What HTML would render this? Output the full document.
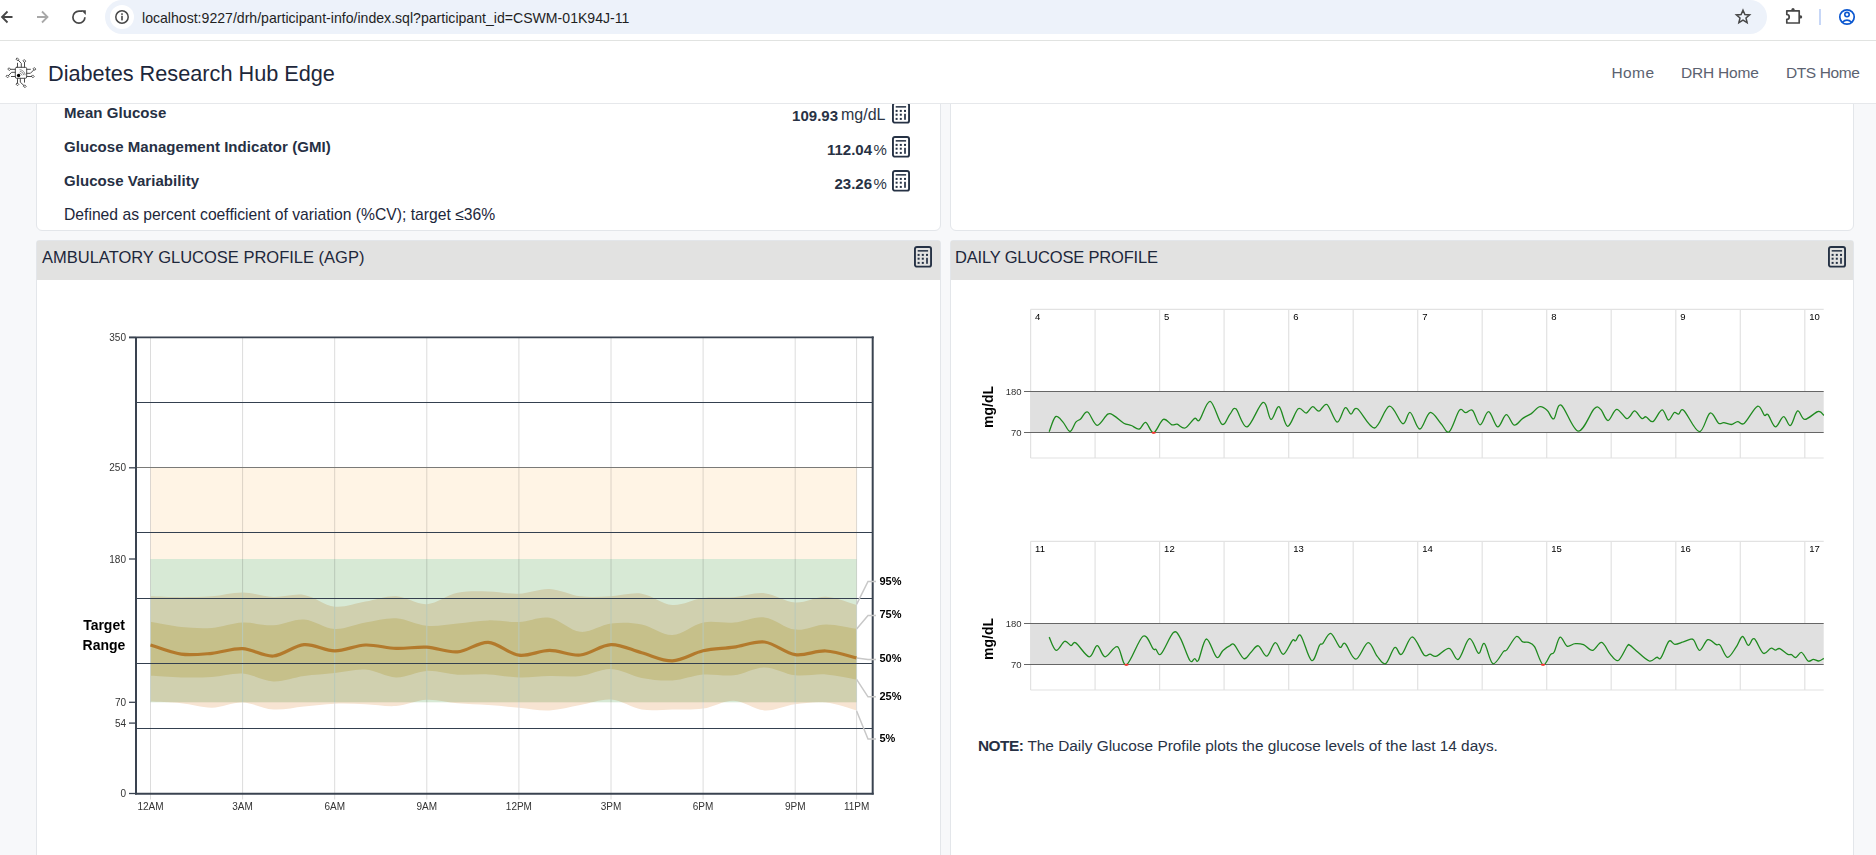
<!DOCTYPE html>
<html><head><meta charset="utf-8">
<style>
*{box-sizing:border-box;margin:0;padding:0}
html,body{width:1876px;height:855px;overflow:hidden;background:#f7f8fa;font-family:"Liberation Sans",sans-serif;color:#1d273b}
.abs{position:absolute}
#chrome{position:absolute;left:0;top:0;width:1876px;height:41px;background:#fff;border-bottom:1px solid #e1e3e1;z-index:20}
#pill{position:absolute;left:105px;top:0px;width:1662px;height:34px;border-radius:17px;background:#edf2fa}
#infoc{position:absolute;left:110px;top:5px;width:24px;height:24px;border-radius:12px;background:#fff}
#url{position:absolute;left:142px;top:9.5px;font-size:14.1px;color:#1f1f1f;white-space:nowrap;letter-spacing:0}
#nav{position:absolute;left:0;top:41px;width:1876px;height:63px;background:#fff;border-bottom:1px solid #e6e8eb;z-index:10}
#brand{position:absolute;left:48px;top:61px;font-size:21.7px;color:#1d273b;white-space:nowrap;z-index:11}
.nl{position:absolute;top:64px;font-size:15.5px;color:#5b6270;white-space:nowrap;z-index:11}
.card{position:absolute;background:#fff;border:1px solid #e3e6ea;border-radius:6px}
.hdr{position:absolute;background:#e2e2e1;}
.ht{position:absolute;font-size:16.5px;color:#1d273b;white-space:nowrap}
.lbl{position:absolute;font-size:15px;font-weight:bold;color:#263044;letter-spacing:0.05px;white-space:nowrap}
.val{position:absolute;font-size:15px;white-space:nowrap;color:#1d273b;text-align:right}
svg text{font-family:"Liberation Sans",sans-serif}
.ax{font-size:10px;fill:#333}
.pl{font-size:11px;font-weight:bold;fill:#000}
.tr{font-size:14px;font-weight:bold;fill:#000}
.dax{font-size:9.5px;fill:#333}
.dl{font-size:9.5px;fill:#000}
.mg{font-size:14px;font-weight:bold;fill:#000}
</style></head><body>
<!-- browser chrome -->
<div id="chrome">
  <svg class="abs" style="left:0;top:0" width="100" height="40" viewBox="0 0 100 40">
    <path d="M12.5,17 H2.5 M7.5,11.5 L2,17 L7.5,22.5" fill="none" stroke="#474747" stroke-width="1.8"/>
    <path d="M37,17 H47.5 M42,11.5 L47.5,17 L42,22.5" fill="none" stroke="#a8a8a8" stroke-width="1.8"/>
    <path d="M84.9,17.2 A6,6 0 1 1 78.9,11.2 H82.5" fill="none" stroke="#474747" stroke-width="1.7"/>
    <path d="M81.2,10.3 L85.8,10.3 L85.8,14.9 Z" fill="#474747"/>
  </svg>
  <div id="pill"></div>
  <div id="infoc"></div>
  <svg class="abs" style="left:114px;top:9px" width="16" height="16" viewBox="0 0 16 16">
    <circle cx="8" cy="8" r="6.2" fill="none" stroke="#474747" stroke-width="1.5"/>
    <rect x="7.2" y="6.8" width="1.6" height="4.6" fill="#474747"/>
    <rect x="7.2" y="4.3" width="1.6" height="1.6" fill="#474747"/>
  </svg>
  <div id="url">localhost:9227/drh/participant-info/index.sql?participant_id=CSWM-01K94J-11</div>
  <svg class="abs" style="left:1734px;top:8px" width="18" height="18" viewBox="0 0 18 18">
    <path d="M9,2.2 L10.9,6.6 L15.6,6.9 L12,10 L13.1,14.6 L9,12.1 L4.9,14.6 L6,10 L2.4,6.9 L7.1,6.6 Z" fill="none" stroke="#474747" stroke-width="1.5" stroke-linejoin="miter"/>
  </svg>
  <svg class="abs" style="left:1780px;top:4px" width="26" height="24" viewBox="1780 4 26 24">
    <path d="M1786.8,10.8 H1799.2 V23 H1786.8 V19.3 A2.4,2.4 0 0 0 1786.8,14.5 Z" fill="none" stroke="#474747" stroke-width="1.7" stroke-linejoin="round"/>
    <circle cx="1793" cy="9.6" r="1.6" fill="#474747"/>
    <circle cx="1800.6" cy="16.9" r="1.6" fill="#474747"/>
  </svg>
  <div class="abs" style="left:1819px;top:9px;width:1.5px;height:16px;background:#c7d7f7"></div>
  <svg class="abs" style="left:1837px;top:7px" width="20" height="20" viewBox="0 0 20 20">
    <circle cx="10" cy="10" r="7.2" fill="none" stroke="#0b57d0" stroke-width="1.7"/>
    <circle cx="10" cy="7.6" r="2.2" fill="none" stroke="#0b57d0" stroke-width="1.6"/>
    <path d="M5.3,15.3 Q10,11 14.7,15.3" fill="none" stroke="#0b57d0" stroke-width="1.6"/>
  </svg>
</div>
<!-- navbar -->
<div id="nav"></div>
<svg class="abs" style="left:4px;top:56px;z-index:12" width="34" height="34" viewBox="0 0 34 34">
  <g fill="none" stroke="#4a4a4a" stroke-width="1.0" stroke-linecap="round" stroke-linejoin="round">
    <rect x="11.3" y="11.3" width="11.4" height="11" rx="1.4"/>
    <path d="M13.5,11.3 V7.2 M17.3,11.3 V7.4 L14.2,4.1 M20.5,11.3 V6.4 M11.3,13.3 H6.5 M11.3,16.3 H7.6 L4.4,19.7 M11.3,20.5 H7.4 M22.7,13.3 H26.4 M22.7,17.3 H26.4 L29.9,13.8 M22.7,20.5 H27.7 M13.5,22.3 V27.2 M16.3,22.3 V26.2 L20.1,29.7 M20.5,22.3 V26.2"/>
    <g stroke-width="0.9"><path d="M13.5,2.1 L14.8,3.4 L13.5,4.7 L12.2,3.4 Z"/><path d="M20.5,3.8 L21.8,5.1 L20.5,6.4 L19.2,5.1 Z"/><path d="M5.3,12.0 L6.6,13.3 L5.3,14.6 L4.0,13.3 Z"/><path d="M3.6,19.2 L4.9,20.5 L3.6,21.8 L2.3,20.5 Z"/><path d="M30.6,11.8 L31.9,13.1 L30.6,14.4 L29.3,13.1 Z"/><path d="M28.9,19.2 L30.2,20.5 L28.9,21.8 L27.6,20.5 Z"/><path d="M13.5,27.1 L14.8,28.4 L13.5,29.7 L12.2,28.4 Z"/><path d="M20.9,29.1 L22.2,30.4 L20.9,31.7 L19.6,30.4 Z"/></g>
    <g stroke-width="0.8" stroke="#777"><path d="M16.2,15.2 A4.6,4.6 0 0 1 19.8,18.8"/><path d="M16,13.6 A6.3,6.3 0 0 1 21.2,18.8" /><path d="M15.8,17 A3,3 0 0 1 18,19"/></g>
  </g>
  <circle cx="14.6" cy="19.5" r="1.7" fill="#000"/>
</svg>
<div id="brand">Diabetes Research Hub Edge</div>
<div class="nl" style="left:1611.5px;letter-spacing:0.4px">Home</div>
<div class="nl" style="left:1681px;letter-spacing:-0.2px">DRH Home</div>
<div class="nl" style="left:1786px;letter-spacing:-0.4px">DTS Home</div>

<!-- top cards (scrolled) -->
<div class="card" style="left:36px;top:60px;width:905px;height:171px"></div>
<div class="card" style="left:950px;top:60px;width:904px;height:171px"></div>
<div class="lbl" style="left:64px;top:104px">Mean Glucose</div>
<div class="lbl" style="left:64px;top:138px">Glucose Management Indicator (GMI)</div>
<div class="lbl" style="left:64px;top:172px">Glucose Variability</div>
<div class="abs" style="left:64px;top:206px;font-size:15.7px;color:#1d273b;white-space:nowrap">Defined as percent coefficient of variation (%CV); target ≤36%</div>
<div class="val" style="right:1038px;top:106.5px;font-weight:bold;color:#283244">109.93</div><div class="abs" style="left:841px;top:106px;font-size:16px;color:#2c3545">mg/dL</div>
<div class="val" style="right:1004px;top:140.5px;font-weight:bold;color:#283244">112.04</div><div class="abs" style="left:873.5px;top:140.5px;font-size:15px;color:#2c3545">%</div>
<div class="val" style="right:1004px;top:174.5px;font-weight:bold;color:#283244">23.26</div><div class="abs" style="left:873.5px;top:174.5px;font-size:15px;color:#2c3545">%</div>
<svg class="calc" style="position:absolute;left:892px;top:102px" width="18" height="22" viewBox="0 0 18 22"><rect x="0.95" y="0.95" width="16.1" height="19.7" rx="2" fill="none" stroke="#263245" stroke-width="1.9"/><rect x="3.7" y="4.1" width="10.4" height="1.5" fill="#263245"/><rect x="3.60" y="7.90" width="2" height="2" fill="#263245"/><rect x="7.80" y="7.90" width="2" height="2" fill="#263245"/><rect x="12.00" y="7.90" width="2" height="2" fill="#263245"/><rect x="3.60" y="11.70" width="2" height="2" fill="#263245"/><rect x="7.80" y="11.70" width="2" height="2" fill="#263245"/><rect x="3.60" y="15.90" width="2" height="2" fill="#263245"/><rect x="7.80" y="15.90" width="2" height="2" fill="#263245"/><rect x="12.15" y="11.8" width="1.7" height="6" fill="#263245"/></svg>
<svg class="calc" style="position:absolute;left:892px;top:135.5px" width="18" height="22" viewBox="0 0 18 22"><rect x="0.95" y="0.95" width="16.1" height="19.7" rx="2" fill="none" stroke="#263245" stroke-width="1.9"/><rect x="3.7" y="4.1" width="10.4" height="1.5" fill="#263245"/><rect x="3.60" y="7.90" width="2" height="2" fill="#263245"/><rect x="7.80" y="7.90" width="2" height="2" fill="#263245"/><rect x="12.00" y="7.90" width="2" height="2" fill="#263245"/><rect x="3.60" y="11.70" width="2" height="2" fill="#263245"/><rect x="7.80" y="11.70" width="2" height="2" fill="#263245"/><rect x="3.60" y="15.90" width="2" height="2" fill="#263245"/><rect x="7.80" y="15.90" width="2" height="2" fill="#263245"/><rect x="12.15" y="11.8" width="1.7" height="6" fill="#263245"/></svg>
<svg class="calc" style="position:absolute;left:892px;top:169.5px" width="18" height="22" viewBox="0 0 18 22"><rect x="0.95" y="0.95" width="16.1" height="19.7" rx="2" fill="none" stroke="#263245" stroke-width="1.9"/><rect x="3.7" y="4.1" width="10.4" height="1.5" fill="#263245"/><rect x="3.60" y="7.90" width="2" height="2" fill="#263245"/><rect x="7.80" y="7.90" width="2" height="2" fill="#263245"/><rect x="12.00" y="7.90" width="2" height="2" fill="#263245"/><rect x="3.60" y="11.70" width="2" height="2" fill="#263245"/><rect x="7.80" y="11.70" width="2" height="2" fill="#263245"/><rect x="3.60" y="15.90" width="2" height="2" fill="#263245"/><rect x="7.80" y="15.90" width="2" height="2" fill="#263245"/><rect x="12.15" y="11.8" width="1.7" height="6" fill="#263245"/></svg>

<!-- AGP card -->
<div class="card" style="left:36px;top:240px;width:905px;height:700px;border-radius:3px"></div>
<div class="hdr" style="left:37px;top:241px;width:903px;height:39px"></div>
<div class="ht" style="left:42px;top:248px">AMBULATORY GLUCOSE PROFILE (AGP)</div>
<svg class="calc" style="position:absolute;left:914px;top:246px" width="18" height="22" viewBox="0 0 18 22"><rect x="0.95" y="0.95" width="16.1" height="19.7" rx="2" fill="none" stroke="#263245" stroke-width="1.9"/><rect x="3.7" y="4.1" width="10.4" height="1.5" fill="#263245"/><rect x="3.60" y="7.90" width="2" height="2" fill="#263245"/><rect x="7.80" y="7.90" width="2" height="2" fill="#263245"/><rect x="12.00" y="7.90" width="2" height="2" fill="#263245"/><rect x="3.60" y="11.70" width="2" height="2" fill="#263245"/><rect x="7.80" y="11.70" width="2" height="2" fill="#263245"/><rect x="3.60" y="15.90" width="2" height="2" fill="#263245"/><rect x="7.80" y="15.90" width="2" height="2" fill="#263245"/><rect x="12.15" y="11.8" width="1.7" height="6" fill="#263245"/></svg>
<!-- Daily card -->
<div class="card" style="left:950px;top:240px;width:904px;height:700px;border-radius:3px"></div>
<div class="hdr" style="left:951px;top:241px;width:902px;height:39px"></div>
<div class="ht" style="left:955px;top:248px;letter-spacing:-0.18px">DAILY GLUCOSE PROFILE</div>
<svg class="calc" style="position:absolute;left:1828px;top:246px" width="18" height="22" viewBox="0 0 18 22"><rect x="0.95" y="0.95" width="16.1" height="19.7" rx="2" fill="none" stroke="#263245" stroke-width="1.9"/><rect x="3.7" y="4.1" width="10.4" height="1.5" fill="#263245"/><rect x="3.60" y="7.90" width="2" height="2" fill="#263245"/><rect x="7.80" y="7.90" width="2" height="2" fill="#263245"/><rect x="12.00" y="7.90" width="2" height="2" fill="#263245"/><rect x="3.60" y="11.70" width="2" height="2" fill="#263245"/><rect x="7.80" y="11.70" width="2" height="2" fill="#263245"/><rect x="3.60" y="15.90" width="2" height="2" fill="#263245"/><rect x="7.80" y="15.90" width="2" height="2" fill="#263245"/><rect x="12.15" y="11.8" width="1.7" height="6" fill="#263245"/></svg>
<div class="abs" style="left:978px;top:737px;font-size:15.4px;color:#283245;white-space:nowrap"><b style="letter-spacing:-0.5px;color:#263044">NOTE:</b> The Daily Glucose Profile plots the glucose levels of the last 14 days.</div>

<svg class="abs" style="left:0;top:0;z-index:5" width="1876" height="855" viewBox="0 0 1876 855">
<rect x="150.5" y="467.8" width="706.1" height="91.2" fill="#fff4e5"/>
<rect x="150.5" y="559.0" width="706.1" height="143.3" fill="#d7e9d5"/>
<g style="mix-blend-mode:multiply">
<path d="M150.5,596.3 C155.6,596.4 171.0,597.2 181.2,597.2 C191.4,597.2 201.7,597.1 211.9,596.3 C222.1,595.5 232.4,592.4 242.6,592.5 C252.8,592.6 263.1,596.6 273.3,597.0 C283.5,597.4 293.8,593.4 304.0,595.0 C314.2,596.6 324.5,605.6 334.7,606.7 C344.9,607.8 355.2,603.3 365.4,601.6 C375.6,599.9 385.9,595.9 396.1,596.3 C406.3,596.7 416.6,604.8 426.8,604.2 C437.0,603.6 447.3,594.9 457.5,592.8 C467.7,590.7 478.0,591.2 488.2,591.4 C498.4,591.5 508.7,594.1 518.9,593.7 C529.1,593.3 539.4,588.6 549.6,589.0 C559.8,589.4 570.1,595.1 580.3,596.3 C590.5,597.5 600.8,596.7 611.0,596.3 C621.2,595.9 631.5,592.2 641.7,593.7 C651.9,595.2 662.2,604.3 672.4,605.0 C682.6,605.7 692.9,599.3 703.1,598.0 C713.3,596.7 723.6,598.0 733.8,597.2 C744.0,596.4 754.3,592.3 764.5,593.2 C774.7,594.1 785.0,601.9 795.2,602.5 C805.4,603.1 815.7,596.3 825.9,596.7 C836.1,597.1 851.5,603.6 856.6,605.0 L856.6,710.4 C851.5,709.1 836.1,703.5 825.9,702.5 C815.7,701.5 805.4,702.9 795.2,704.2 C785.0,705.5 774.7,711.0 764.5,710.4 C754.3,709.8 744.0,701.0 733.8,700.7 C723.6,700.4 713.3,707.1 703.1,708.6 C692.9,710.1 682.6,709.4 672.4,709.5 C662.2,709.6 651.9,711.2 641.7,709.5 C631.5,707.8 621.2,700.2 611.0,699.5 C600.8,698.8 590.5,703.2 580.3,705.0 C570.1,706.8 559.8,709.9 549.6,710.4 C539.4,710.9 529.1,708.6 518.9,707.7 C508.7,706.8 498.4,705.7 488.2,705.0 C478.0,704.3 467.7,704.2 457.5,703.3 C447.3,702.4 437.0,699.3 426.8,699.8 C416.6,700.2 406.3,705.3 396.1,706.0 C385.9,706.7 375.6,704.6 365.4,704.2 C355.2,703.8 344.9,703.3 334.7,703.7 C324.5,704.1 314.2,705.5 304.0,706.5 C293.8,707.5 283.5,710.2 273.3,709.5 C263.1,708.8 252.8,702.8 242.6,702.5 C232.4,702.2 222.1,707.6 211.9,707.7 C201.7,707.8 191.4,704.3 181.2,703.3 C171.0,702.3 155.6,701.9 150.5,701.6 Z" fill="#f7e4d2"/>
<path d="M150.5,621.8 C155.6,622.7 171.0,626.0 181.2,627.0 C191.4,628.0 201.7,628.6 211.9,627.9 C222.1,627.2 232.4,623.0 242.6,622.6 C252.8,622.2 263.1,625.8 273.3,625.3 C283.5,624.8 293.8,618.9 304.0,619.5 C314.2,620.1 324.5,628.5 334.7,629.0 C344.9,629.5 355.2,624.4 365.4,622.6 C375.6,620.8 385.9,617.7 396.1,618.2 C406.3,618.7 416.6,624.9 426.8,625.8 C437.0,626.7 447.3,624.4 457.5,623.5 C467.7,622.6 478.0,620.6 488.2,620.4 C498.4,620.1 508.7,622.5 518.9,622.0 C529.1,621.5 539.4,616.1 549.6,617.7 C559.8,619.3 570.1,630.8 580.3,631.8 C590.5,632.8 600.8,624.7 611.0,623.5 C621.2,622.3 631.5,622.5 641.7,624.4 C651.9,626.3 662.2,635.3 672.4,635.0 C682.6,634.7 692.9,624.6 703.1,622.5 C713.3,620.4 723.6,623.5 733.8,622.6 C744.0,621.8 754.3,616.2 764.5,617.4 C774.7,618.6 785.0,628.4 795.2,629.6 C805.4,630.8 815.7,624.5 825.9,624.4 C836.1,624.3 851.5,628.1 856.6,628.8 L856.6,679.6 C851.5,678.7 836.1,675.1 825.9,674.4 C815.7,673.7 805.4,676.5 795.2,675.3 C785.0,674.1 774.7,667.4 764.5,667.4 C754.3,667.4 744.0,674.1 733.8,675.3 C723.6,676.5 713.3,673.7 703.1,674.6 C692.9,675.5 682.6,680.0 672.4,680.5 C662.2,681.0 651.9,679.8 641.7,677.9 C631.5,676.0 621.2,669.4 611.0,669.1 C600.8,668.8 590.5,674.9 580.3,676.1 C570.1,677.3 559.8,675.9 549.6,676.1 C539.4,676.3 529.1,677.7 518.9,677.4 C508.7,677.1 498.4,674.8 488.2,674.4 C478.0,674.0 467.7,675.3 457.5,674.7 C447.3,674.1 437.0,670.5 426.8,670.9 C416.6,671.3 406.3,677.6 396.1,677.4 C385.9,677.2 375.6,670.3 365.4,669.6 C355.2,668.9 344.9,671.9 334.7,673.0 C324.5,674.1 314.2,674.6 304.0,676.0 C293.8,677.4 283.5,681.8 273.3,681.4 C263.1,681.0 252.8,674.2 242.6,673.5 C232.4,672.8 222.1,676.4 211.9,677.0 C201.7,677.6 191.4,677.6 181.2,677.4 C171.0,677.2 155.6,676.1 150.5,675.8 Z" fill="#ebd2a5" />
<line x1="150.5" y1="337" x2="150.5" y2="799.5" stroke="#dcdcdc" stroke-width="1"/>
<line x1="242.6" y1="337" x2="242.6" y2="799.5" stroke="#dcdcdc" stroke-width="1"/>
<line x1="334.7" y1="337" x2="334.7" y2="799.5" stroke="#dcdcdc" stroke-width="1"/>
<line x1="426.8" y1="337" x2="426.8" y2="799.5" stroke="#dcdcdc" stroke-width="1"/>
<line x1="518.9" y1="337" x2="518.9" y2="799.5" stroke="#dcdcdc" stroke-width="1"/>
<line x1="611.0" y1="337" x2="611.0" y2="799.5" stroke="#dcdcdc" stroke-width="1"/>
<line x1="703.1" y1="337" x2="703.1" y2="799.5" stroke="#dcdcdc" stroke-width="1"/>
<line x1="795.2" y1="337" x2="795.2" y2="799.5" stroke="#dcdcdc" stroke-width="1"/>
<line x1="856.6" y1="337" x2="856.6" y2="799.5" stroke="#dcdcdc" stroke-width="1"/>
</g>
<path d="M150.5,645.0 C155.6,646.5 171.0,652.8 181.2,654.2 C191.4,655.6 201.7,654.2 211.9,653.3 C222.1,652.4 232.4,648.1 242.6,648.6 C252.8,649.1 263.1,656.7 273.3,656.0 C283.5,655.3 293.8,645.5 304.0,644.6 C314.2,643.7 324.5,650.7 334.7,650.8 C344.9,650.9 355.2,645.4 365.4,645.0 C375.6,644.6 385.9,648.0 396.1,648.4 C406.3,648.8 416.6,646.6 426.8,647.2 C437.0,647.8 447.3,652.7 457.5,651.9 C467.7,651.1 478.0,641.8 488.2,642.3 C498.4,642.8 508.7,653.9 518.9,655.2 C529.1,656.6 539.4,650.4 549.6,650.4 C559.8,650.4 570.1,656.0 580.3,655.0 C590.5,654.0 600.8,645.0 611.0,644.6 C621.2,644.2 631.5,650.1 641.7,652.8 C651.9,655.5 662.2,661.2 672.4,660.9 C682.6,660.6 692.9,653.1 703.1,650.8 C713.3,648.5 723.6,648.7 733.8,647.2 C744.0,645.7 754.3,640.8 764.5,642.0 C774.7,643.2 785.0,653.1 795.2,654.6 C805.4,656.1 815.7,650.4 825.9,651.0 C836.1,651.6 851.5,656.8 856.6,658.0" fill="none" stroke="#b37a2c" stroke-width="3.2" stroke-linecap="butt"/>
<line x1="136" y1="402.5" x2="873" y2="402.5" stroke="#34404f" stroke-width="1.1"/>
<line x1="136" y1="467.5" x2="873" y2="467.5" stroke="#7a7a78" stroke-width="1.1"/>
<line x1="136" y1="532.5" x2="873" y2="532.5" stroke="#34404f" stroke-width="1.1"/>
<line x1="136" y1="598.5" x2="873" y2="598.5" stroke="#34404f" stroke-width="1.1"/>
<line x1="136" y1="663.5" x2="873" y2="663.5" stroke="#34404f" stroke-width="1.1"/>
<line x1="136" y1="728.5" x2="873" y2="728.5" stroke="#34404f" stroke-width="1.1"/>
<line x1="136" y1="337.3" x2="136" y2="794.5" stroke="#3a4350" stroke-width="2"/>
<line x1="135" y1="793.8" x2="873.7" y2="793.8" stroke="#3a4350" stroke-width="2"/>
<line x1="129" y1="337.3" x2="873.7" y2="337.3" stroke="#3a4350" stroke-width="1.8"/>
<line x1="872.7" y1="336.5" x2="872.7" y2="794.5" stroke="#3a4350" stroke-width="2"/>
<line x1="129" y1="337.5" x2="136" y2="337.5" stroke="#3a4350" stroke-width="1.3"/>
<text x="126" y="341.0" text-anchor="end" class="ax">350</text>
<line x1="129" y1="467.8" x2="136" y2="467.8" stroke="#3a4350" stroke-width="1.3"/>
<text x="126" y="471.3" text-anchor="end" class="ax">250</text>
<line x1="129" y1="559.0" x2="136" y2="559.0" stroke="#3a4350" stroke-width="1.3"/>
<text x="126" y="562.5" text-anchor="end" class="ax">180</text>
<line x1="129" y1="702.3" x2="136" y2="702.3" stroke="#3a4350" stroke-width="1.3"/>
<text x="126" y="705.8" text-anchor="end" class="ax">70</text>
<line x1="129" y1="723.1" x2="136" y2="723.1" stroke="#3a4350" stroke-width="1.3"/>
<text x="126" y="726.6" text-anchor="end" class="ax">54</text>
<line x1="129" y1="793.5" x2="136" y2="793.5" stroke="#3a4350" stroke-width="1.3"/>
<text x="126" y="797.0" text-anchor="end" class="ax">0</text>
<text x="150.5" y="810" text-anchor="middle" class="ax">12AM</text>
<text x="242.6" y="810" text-anchor="middle" class="ax">3AM</text>
<text x="334.7" y="810" text-anchor="middle" class="ax">6AM</text>
<text x="426.8" y="810" text-anchor="middle" class="ax">9AM</text>
<text x="518.9" y="810" text-anchor="middle" class="ax">12PM</text>
<text x="611.0" y="810" text-anchor="middle" class="ax">3PM</text>
<text x="703.1" y="810" text-anchor="middle" class="ax">6PM</text>
<text x="795.2" y="810" text-anchor="middle" class="ax">9PM</text>
<text x="856.6" y="810" text-anchor="middle" class="ax">11PM</text>
<polyline points="856.6,604.4 868,581.5 876,581.5" fill="none" stroke="#c8c8c8" stroke-width="1.5"/>
<text x="879.5" y="584.5" class="pl">95%</text>
<polyline points="856.6,629.0 868,615.4 876,615.4" fill="none" stroke="#c8c8c8" stroke-width="1.5"/>
<text x="879.5" y="618.4" class="pl">75%</text>
<polyline points="856.6,658.0 868,659.4 876,659.4" fill="none" stroke="#c8c8c8" stroke-width="1.5"/>
<text x="879.5" y="662.4" class="pl">50%</text>
<polyline points="856.6,679.3 868,696.8 876,696.8" fill="none" stroke="#c8c8c8" stroke-width="1.5"/>
<text x="879.5" y="699.8" class="pl">25%</text>
<polyline points="856.6,711.0 868,739.0 876,739.0" fill="none" stroke="#c8c8c8" stroke-width="1.5"/>
<text x="879.5" y="742.0" class="pl">5%</text>
<text x="104" y="630" text-anchor="middle" class="tr">Target</text>
<text x="104" y="650" text-anchor="middle" class="tr">Range</text>
<line x1="1030.6" y1="309.3" x2="1030.6" y2="458.0" stroke="#e2e2e2" stroke-width="1.2"/>
<line x1="1095.1" y1="309.3" x2="1095.1" y2="458.0" stroke="#e2e2e2" stroke-width="1.2"/>
<line x1="1159.6" y1="309.3" x2="1159.6" y2="458.0" stroke="#e2e2e2" stroke-width="1.2"/>
<line x1="1224.1" y1="309.3" x2="1224.1" y2="458.0" stroke="#e2e2e2" stroke-width="1.2"/>
<line x1="1288.7" y1="309.3" x2="1288.7" y2="458.0" stroke="#e2e2e2" stroke-width="1.2"/>
<line x1="1353.2" y1="309.3" x2="1353.2" y2="458.0" stroke="#e2e2e2" stroke-width="1.2"/>
<line x1="1417.7" y1="309.3" x2="1417.7" y2="458.0" stroke="#e2e2e2" stroke-width="1.2"/>
<line x1="1482.2" y1="309.3" x2="1482.2" y2="458.0" stroke="#e2e2e2" stroke-width="1.2"/>
<line x1="1546.7" y1="309.3" x2="1546.7" y2="458.0" stroke="#e2e2e2" stroke-width="1.2"/>
<line x1="1611.2" y1="309.3" x2="1611.2" y2="458.0" stroke="#e2e2e2" stroke-width="1.2"/>
<line x1="1675.8" y1="309.3" x2="1675.8" y2="458.0" stroke="#e2e2e2" stroke-width="1.2"/>
<line x1="1740.3" y1="309.3" x2="1740.3" y2="458.0" stroke="#e2e2e2" stroke-width="1.2"/>
<line x1="1804.8" y1="309.3" x2="1804.8" y2="458.0" stroke="#e2e2e2" stroke-width="1.2"/>
<line x1="1030.6" y1="309.3" x2="1823.7" y2="309.3" stroke="#e2e2e2" stroke-width="1.2"/>
<line x1="1030.6" y1="458.0" x2="1823.7" y2="458.0" stroke="#e2e2e2" stroke-width="1.2"/>
<rect x="1030.6" y="391.8" width="793.1" height="40.4" fill="#e0e0e0"/>
<line x1="1024" y1="391.5" x2="1823.7" y2="391.5" stroke="#666" stroke-width="1.1"/>
<line x1="1024" y1="432.5" x2="1823.7" y2="432.5" stroke="#666" stroke-width="1.1"/>
<text x="1021.5" y="395.1" text-anchor="end" class="dax">180</text>
<text x="1021.5" y="435.5" text-anchor="end" class="dax">70</text>
<text x="1035.1" y="319.8" class="dl">4</text>
<text x="1164.1" y="319.8" class="dl">5</text>
<text x="1293.2" y="319.8" class="dl">6</text>
<text x="1422.2" y="319.8" class="dl">7</text>
<text x="1551.2" y="319.8" class="dl">8</text>
<text x="1680.2" y="319.8" class="dl">9</text>
<text x="1809.3" y="319.8" class="dl">10</text>
<text transform="translate(993.3,407.0) rotate(-90)" text-anchor="middle" class="mg">mg/dL</text>
<path d="M1049.2,431.7 C1050.3,429.2 1053.3,418.2 1055.6,416.6 C1057.9,415.0 1060.7,419.6 1063.0,422.1 C1065.4,424.6 1067.8,431.5 1070.0,431.5 C1072.1,431.5 1074.1,424.2 1075.8,422.1 C1077.6,420.0 1078.7,420.6 1080.6,418.9 C1082.6,417.2 1084.8,410.9 1087.6,412.0 C1090.3,413.1 1093.8,425.0 1097.2,425.3 C1100.5,425.7 1105.0,415.7 1107.8,414.1 C1110.7,412.6 1111.6,414.4 1114.2,415.9 C1116.9,417.4 1121.0,421.6 1123.8,423.2 C1126.7,424.8 1128.7,424.5 1131.3,425.5 C1133.9,426.5 1136.9,429.6 1139.3,429.0 C1141.7,428.5 1143.3,421.7 1145.7,422.3 C1148.1,423.0 1150.7,433.3 1153.7,432.8 C1156.6,432.3 1160.2,420.8 1163.3,419.4 C1166.3,418.1 1169.5,424.0 1171.8,424.8 C1174.1,425.6 1174.9,423.7 1177.1,424.2 C1179.3,424.8 1182.2,429.0 1185.1,428.0 C1188.0,427.0 1192.3,419.7 1194.7,418.4 C1197.1,417.1 1196.9,422.8 1199.5,420.0 C1202.1,417.1 1206.4,400.6 1210.2,401.3 C1213.9,402.0 1218.6,422.1 1221.9,424.2 C1225.2,426.4 1227.7,416.7 1230.0,414.1 C1232.3,411.5 1233.0,406.7 1235.9,408.8 C1238.7,410.9 1242.5,428.0 1247.1,426.9 C1251.6,425.8 1259.1,403.6 1263.0,402.4 C1267.0,401.1 1268.4,418.7 1271.0,419.4 C1273.7,420.2 1276.3,405.5 1279.0,406.7 C1281.8,407.8 1284.4,426.0 1287.6,426.4 C1290.8,426.7 1295.1,411.0 1298.2,408.8 C1301.3,406.6 1303.8,413.4 1306.2,413.1 C1308.6,412.7 1310.5,407.0 1312.6,406.7 C1314.8,406.4 1316.6,411.6 1319.0,411.2 C1321.4,410.9 1324.0,402.7 1327.0,404.5 C1330.0,406.3 1334.1,421.6 1337.1,422.1 C1340.2,422.6 1342.8,409.1 1345.1,407.7 C1347.4,406.4 1349.0,413.9 1351.0,414.1 C1353.0,414.3 1353.5,406.5 1357.4,408.8 C1361.3,411.1 1369.1,428.4 1374.5,428.0 C1379.8,427.5 1384.7,406.8 1389.4,406.1 C1394.1,405.4 1399.2,422.6 1402.7,423.7 C1406.2,424.8 1407.3,411.6 1410.2,412.5 C1413.0,413.4 1416.5,429.0 1419.8,429.0 C1423.1,429.0 1426.5,413.5 1430.0,412.5 C1433.5,411.5 1437.5,420.0 1440.7,423.2 C1443.9,426.4 1446.1,433.8 1449.2,431.7 C1452.3,429.6 1456.6,413.6 1459.3,410.4 C1462.1,407.2 1463.5,412.7 1465.7,412.7 C1467.9,412.7 1470.2,408.4 1472.6,410.4 C1475.0,412.4 1477.4,424.6 1480.1,424.8 C1482.8,425.0 1485.7,411.3 1488.6,411.7 C1491.6,412.0 1494.8,426.4 1497.7,426.9 C1500.6,427.4 1503.5,415.0 1506.2,414.7 C1509.0,414.4 1511.5,424.5 1514.2,425.1 C1517.0,425.7 1519.9,420.3 1522.8,418.4 C1525.6,416.5 1528.4,415.5 1531.3,413.6 C1534.1,411.6 1537.1,407.2 1539.8,406.7 C1542.5,406.1 1545.0,408.3 1547.3,410.4 C1549.6,412.4 1551.4,419.8 1553.7,418.9 C1556.0,418.0 1557.0,403.0 1561.1,405.1 C1565.2,407.1 1572.7,430.6 1578.2,431.2 C1583.7,431.8 1590.4,412.4 1594.2,408.8 C1597.9,405.1 1598.3,407.4 1600.6,409.3 C1602.9,411.3 1605.4,420.5 1608.0,420.5 C1610.7,420.5 1613.5,409.7 1616.6,409.3 C1619.6,409.0 1623.9,417.2 1626.2,418.4 C1628.4,419.5 1628.6,417.5 1630.0,416.3 C1631.4,415.0 1632.8,410.6 1634.8,410.9 C1636.8,411.3 1639.9,417.4 1641.7,418.4 C1643.6,419.4 1644.1,416.3 1646.0,416.8 C1647.9,417.3 1650.3,422.7 1652.9,421.6 C1655.6,420.4 1659.4,410.1 1662.0,409.9 C1664.6,409.6 1666.3,419.5 1668.4,420.0 C1670.4,420.4 1672.6,413.5 1674.2,412.5 C1675.9,411.5 1676.9,414.5 1678.5,414.1 C1680.1,413.8 1680.4,407.5 1683.8,410.4 C1687.3,413.3 1694.9,431.3 1699.3,431.7 C1703.6,432.2 1706.8,414.5 1710.0,413.1 C1713.2,411.6 1716.2,421.6 1718.5,423.2 C1720.8,424.8 1721.7,422.4 1723.8,422.6 C1725.9,422.9 1729.0,424.6 1731.3,424.5 C1733.6,424.3 1735.5,421.8 1737.7,421.6 C1739.8,421.4 1740.8,425.9 1744.1,423.4 C1747.4,420.9 1754.0,407.7 1757.4,406.3 C1760.8,405.0 1762.6,413.8 1764.3,415.2 C1766.1,416.6 1766.2,412.7 1768.1,414.7 C1769.9,416.6 1772.9,426.6 1775.5,426.9 C1778.1,427.2 1781.0,416.8 1783.5,416.6 C1786.0,416.3 1788.1,426.5 1790.4,425.5 C1792.8,424.6 1795.2,411.9 1797.6,410.9 C1800.0,409.9 1801.4,419.4 1804.8,419.4 C1808.3,419.5 1815.0,412.1 1818.2,411.5 C1821.3,410.8 1822.9,414.8 1823.8,415.5" fill="none" stroke="#1f8a1f" stroke-width="1.3" stroke-linejoin="round"/>
<ellipse cx="1153.7" cy="432.8" rx="2.2" ry="1" fill="#ff3030"/>
<line x1="1030.6" y1="541.3" x2="1030.6" y2="690.0" stroke="#e2e2e2" stroke-width="1.2"/>
<line x1="1095.1" y1="541.3" x2="1095.1" y2="690.0" stroke="#e2e2e2" stroke-width="1.2"/>
<line x1="1159.6" y1="541.3" x2="1159.6" y2="690.0" stroke="#e2e2e2" stroke-width="1.2"/>
<line x1="1224.1" y1="541.3" x2="1224.1" y2="690.0" stroke="#e2e2e2" stroke-width="1.2"/>
<line x1="1288.7" y1="541.3" x2="1288.7" y2="690.0" stroke="#e2e2e2" stroke-width="1.2"/>
<line x1="1353.2" y1="541.3" x2="1353.2" y2="690.0" stroke="#e2e2e2" stroke-width="1.2"/>
<line x1="1417.7" y1="541.3" x2="1417.7" y2="690.0" stroke="#e2e2e2" stroke-width="1.2"/>
<line x1="1482.2" y1="541.3" x2="1482.2" y2="690.0" stroke="#e2e2e2" stroke-width="1.2"/>
<line x1="1546.7" y1="541.3" x2="1546.7" y2="690.0" stroke="#e2e2e2" stroke-width="1.2"/>
<line x1="1611.2" y1="541.3" x2="1611.2" y2="690.0" stroke="#e2e2e2" stroke-width="1.2"/>
<line x1="1675.8" y1="541.3" x2="1675.8" y2="690.0" stroke="#e2e2e2" stroke-width="1.2"/>
<line x1="1740.3" y1="541.3" x2="1740.3" y2="690.0" stroke="#e2e2e2" stroke-width="1.2"/>
<line x1="1804.8" y1="541.3" x2="1804.8" y2="690.0" stroke="#e2e2e2" stroke-width="1.2"/>
<line x1="1030.6" y1="541.3" x2="1823.7" y2="541.3" stroke="#e2e2e2" stroke-width="1.2"/>
<line x1="1030.6" y1="690.0" x2="1823.7" y2="690.0" stroke="#e2e2e2" stroke-width="1.2"/>
<rect x="1030.6" y="623.8" width="793.1" height="40.4" fill="#e0e0e0"/>
<line x1="1024" y1="623.5" x2="1823.7" y2="623.5" stroke="#666" stroke-width="1.1"/>
<line x1="1024" y1="664.5" x2="1823.7" y2="664.5" stroke="#666" stroke-width="1.1"/>
<text x="1021.5" y="627.1" text-anchor="end" class="dax">180</text>
<text x="1021.5" y="667.5" text-anchor="end" class="dax">70</text>
<text x="1035.1" y="551.8" class="dl">11</text>
<text x="1164.1" y="551.8" class="dl">12</text>
<text x="1293.2" y="551.8" class="dl">13</text>
<text x="1422.2" y="551.8" class="dl">14</text>
<text x="1551.2" y="551.8" class="dl">15</text>
<text x="1680.2" y="551.8" class="dl">16</text>
<text x="1809.3" y="551.8" class="dl">17</text>
<text transform="translate(993.3,639.0) rotate(-90)" text-anchor="middle" class="mg">mg/dL</text>
<path d="M1049.2,637.1 C1050.3,639.3 1053.5,649.7 1056.1,650.4 C1058.7,651.1 1062.2,642.1 1064.6,641.3 C1067.1,640.5 1069.2,645.3 1071.0,645.6 C1072.9,645.9 1072.8,641.1 1075.8,642.9 C1078.9,644.8 1085.6,656.3 1089.2,656.8 C1092.7,657.2 1094.5,645.6 1097.2,645.6 C1099.8,645.6 1101.8,656.6 1105.2,656.8 C1108.5,657.0 1113.9,645.3 1117.4,646.7 C1121.0,648.0 1122.2,666.5 1126.5,664.8 C1130.7,663.0 1138.6,638.9 1143.0,636.2 C1147.4,633.5 1151.0,646.6 1153.1,648.8 C1155.3,651.0 1154.5,648.5 1155.8,649.3 C1157.1,650.2 1158.2,656.7 1161.1,653.9 C1164.1,651.1 1170.2,635.2 1173.4,632.6 C1176.6,630.0 1177.6,633.5 1180.3,638.1 C1183.1,642.8 1187.5,657.1 1189.9,660.5 C1192.3,663.9 1193.3,658.6 1194.7,658.6 C1196.1,658.6 1196.5,663.6 1198.4,660.3 C1200.4,657.0 1203.4,639.5 1206.4,639.0 C1209.5,638.5 1213.8,655.4 1216.6,657.3 C1219.3,659.2 1220.7,652.3 1223.0,650.4 C1225.2,648.4 1228.1,646.5 1230.0,645.6 C1231.9,644.6 1232.0,642.6 1234.3,644.7 C1236.6,646.9 1241.1,657.3 1243.9,658.6 C1246.6,659.9 1248.4,654.6 1250.8,652.5 C1253.2,650.4 1255.6,645.2 1258.3,645.8 C1260.9,646.4 1263.9,656.8 1266.8,656.2 C1269.6,655.7 1272.6,642.9 1275.3,642.6 C1278.1,642.3 1280.5,654.7 1283.3,654.3 C1286.1,654.0 1290.3,642.7 1292.4,640.5 C1294.4,638.2 1294.1,641.6 1295.6,640.8 C1297.0,640.0 1298.2,632.5 1300.9,635.8 C1303.6,639.1 1308.4,659.0 1311.6,660.5 C1314.7,662.1 1317.7,647.9 1319.6,645.1 C1321.4,642.2 1320.9,645.4 1322.8,643.5 C1324.6,641.5 1327.9,632.7 1330.7,633.3 C1333.6,633.9 1337.4,645.5 1339.8,647.2 C1342.2,648.9 1342.5,641.4 1345.1,643.5 C1347.8,645.5 1352.0,659.4 1355.8,659.2 C1359.6,659.1 1364.5,643.1 1368.1,642.6 C1371.6,642.1 1374.2,652.7 1377.1,656.2 C1380.1,659.8 1382.7,665.2 1385.7,663.7 C1388.6,662.3 1392.0,649.1 1394.7,647.5 C1397.4,645.9 1398.7,656.1 1401.6,654.3 C1404.6,652.6 1408.6,636.7 1412.3,636.8 C1416.0,637.0 1421.1,652.1 1424.0,655.0 C1427.0,657.8 1427.9,653.9 1430.0,654.1 C1432.1,654.3 1433.2,657.2 1436.4,656.2 C1439.6,655.3 1445.5,647.7 1449.2,648.3 C1452.8,648.8 1454.9,661.0 1458.3,659.4 C1461.6,657.8 1466.1,639.7 1469.4,638.7 C1472.8,637.6 1476.0,652.5 1478.5,653.3 C1481.0,654.1 1482.0,641.7 1484.4,643.5 C1486.8,645.2 1489.7,662.4 1492.9,663.7 C1496.1,665.0 1501.3,653.8 1503.6,651.4 C1505.9,649.1 1504.6,652.3 1506.8,649.9 C1508.9,647.4 1513.7,637.9 1516.4,636.5 C1519.0,635.2 1520.7,640.9 1522.8,641.9 C1524.8,642.8 1526.7,641.6 1528.6,642.4 C1530.6,643.2 1532.1,642.9 1534.5,646.7 C1536.9,650.4 1540.3,663.4 1543.0,664.8 C1545.7,666.1 1548.6,656.8 1550.5,654.6 C1552.3,652.5 1552.6,654.9 1554.2,652.0 C1555.8,649.1 1557.9,638.0 1560.1,637.1 C1562.2,636.1 1564.5,645.0 1567.0,646.1 C1569.5,647.2 1572.2,643.9 1575.0,643.7 C1577.7,643.4 1580.6,643.6 1583.5,644.7 C1586.4,645.9 1589.6,650.8 1592.6,650.4 C1595.6,650.0 1598.7,641.8 1601.6,642.4 C1604.6,643.0 1607.4,651.1 1610.2,654.1 C1612.9,657.1 1615.3,661.8 1618.2,660.5 C1621.0,659.2 1625.3,648.6 1627.2,646.1 C1629.2,643.6 1628.5,644.6 1630.0,645.4 C1631.5,646.2 1633.2,648.3 1636.4,650.9 C1639.6,653.5 1645.8,660.0 1649.2,661.0 C1652.6,662.1 1654.7,657.8 1656.7,657.3 C1658.6,656.8 1658.9,660.5 1660.9,657.8 C1663.0,655.2 1666.6,643.6 1668.9,641.3 C1671.2,639.1 1672.4,644.2 1674.8,644.3 C1677.2,644.4 1680.6,642.7 1683.3,641.9 C1686.0,641.0 1689.0,639.5 1690.8,639.2 C1692.5,638.9 1692.5,638.4 1694.0,640.3 C1695.5,642.1 1697.5,650.5 1699.8,650.4 C1702.1,650.3 1705.1,640.7 1707.8,639.7 C1710.6,638.8 1714.3,643.8 1716.4,644.7 C1718.4,645.6 1718.2,643.0 1720.1,645.1 C1722.0,647.1 1724.9,657.0 1727.5,657.3 C1730.2,657.7 1733.6,650.7 1736.1,647.2 C1738.6,643.7 1740.4,636.8 1742.5,636.5 C1744.5,636.2 1746.4,645.0 1748.3,645.4 C1750.3,645.7 1751.7,637.3 1754.2,638.7 C1756.7,640.0 1760.5,651.7 1763.3,653.3 C1766.0,654.9 1768.7,648.8 1770.7,648.3 C1772.8,647.7 1774.0,650.0 1775.5,650.1 C1777.0,650.1 1777.7,647.9 1779.8,648.6 C1781.8,649.3 1785.8,653.3 1787.8,654.3 C1789.7,655.3 1790.2,654.1 1791.5,654.6 C1792.8,655.2 1794.1,657.9 1795.8,657.5 C1797.5,657.2 1799.6,651.9 1801.6,652.5 C1803.7,653.1 1806.1,659.9 1808.0,661.0 C1810.0,662.2 1811.6,659.4 1813.4,659.4 C1815.1,659.4 1817.0,661.2 1818.7,661.0 C1820.4,660.9 1823.0,658.8 1823.8,658.4" fill="none" stroke="#1f8a1f" stroke-width="1.3" stroke-linejoin="round"/>
<ellipse cx="1126.5" cy="664.8" rx="2.2" ry="1" fill="#ff3030"/>
<ellipse cx="1543.0" cy="664.8" rx="2.2" ry="1" fill="#ff3030"/>
</svg>
</body></html>
